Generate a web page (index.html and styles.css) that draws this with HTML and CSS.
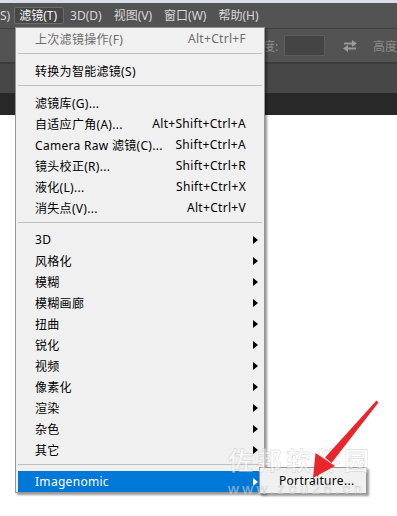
FILE: index.html
```html
<!DOCTYPE html>
<html lang="zh-CN">
<head>
<meta charset="utf-8">
<link rel="stylesheet" href="styles.css">
</head>
<body>
<div class="app">
  <div class="topstrip"></div>
  <div class="menubar">
    <span class="mb-item mb-cut">S)</span>
    <span class="mb-item mb-active">滤镜(T)</span>
    <span class="mb-item">3D(D)</span>
    <span class="mb-item">视图(V)</span>
    <span class="mb-item">窗口(W)</span>
    <span class="mb-item">帮助(H)</span>
  </div>
  <div class="toolbar">
    <span class="tb-label">度:</span>
    <span class="tb-input"></span>
    <svg class="tb-swap" width="16" height="14" viewBox="0 0 16 14">
      <path d="M2 4.5h9" stroke="#9a9a9a" stroke-width="2" fill="none"/>
      <path d="M10 1l5 3.5-5 3.5z" fill="#9a9a9a"/>
      <path d="M14 9.5H5" stroke="#9a9a9a" stroke-width="2" fill="none"/>
      <path d="M6 6l-5 3.5 5 3.5z" fill="#9a9a9a"/>
    </svg>
    <span class="tb-label tb-high">高度</span>
  </div>
  <div class="tabbar"></div>
  <div class="darkband"></div>
  <div class="canvas"></div>
</div>

<div class="dropdown">
  <div class="row disabled"><span class="label">上次滤镜操作(F)</span><span class="key">Alt+Ctrl+F</span><span class="slot"></span></div>
  <div class="sep"></div>
  <div class="row"><span class="label">转换为智能滤镜(S)</span><span class="slot"></span></div>
  <div class="sep"></div>
  <div class="row"><span class="label">滤镜库(G)...</span><span class="slot"></span></div>
  <div class="row"><span class="label">自适应广角(A)...</span><span class="key">Alt+Shift+Ctrl+A</span><span class="slot"></span></div>
  <div class="row"><span class="label">Camera Raw 滤镜(C)...</span><span class="key">Shift+Ctrl+A</span><span class="slot"></span></div>
  <div class="row"><span class="label">镜头校正(R)...</span><span class="key">Shift+Ctrl+R</span><span class="slot"></span></div>
  <div class="row"><span class="label">液化(L)...</span><span class="key">Shift+Ctrl+X</span><span class="slot"></span></div>
  <div class="row"><span class="label">消失点(V)...</span><span class="key">Alt+Ctrl+V</span><span class="slot"></span></div>
  <div class="sep"></div>
  <div class="row"><span class="label">3D</span><span class="slot"><i class="tri"></i></span></div>
  <div class="row"><span class="label">风格化</span><span class="slot"><i class="tri"></i></span></div>
  <div class="row"><span class="label">模糊</span><span class="slot"><i class="tri"></i></span></div>
  <div class="row"><span class="label">模糊画廊</span><span class="slot"><i class="tri"></i></span></div>
  <div class="row"><span class="label">扭曲</span><span class="slot"><i class="tri"></i></span></div>
  <div class="row"><span class="label">锐化</span><span class="slot"><i class="tri"></i></span></div>
  <div class="row"><span class="label">视频</span><span class="slot"><i class="tri"></i></span></div>
  <div class="row"><span class="label">像素化</span><span class="slot"><i class="tri"></i></span></div>
  <div class="row"><span class="label">渲染</span><span class="slot"><i class="tri"></i></span></div>
  <div class="row"><span class="label">杂色</span><span class="slot"><i class="tri"></i></span></div>
  <div class="row"><span class="label">其它</span><span class="slot"><i class="tri"></i></span></div>
  <div class="sep"></div>
  <div class="row hl"><span class="label">Imagenomic</span><span class="slot"><i class="tri tri-w"></i></span></div>
</div>

<div class="submenu"><span class="sub-label">Portraiture...</span></div>

<div class="watermark">
  <div class="wm-big">佐邦软件园</div>
  <div class="wm-small">www.zbu26.cn</div>
</div>

<svg class="redarrow" width="397" height="516" viewBox="0 0 397 516">
  <polygon points="376.5,400.5 378.5,402.5 331.5,463 325,457.5" fill="#e8262b"/>
  <polygon points="313,478 315.5,453 335,466" fill="#e8262b"/>
</svg>
</body>
</html>
```

FILE: styles.css
```css
html, body {
  margin: 0;
  padding: 0;
}
body {
  width: 397px;
  height: 516px;
  overflow: hidden;
  position: relative;
  background: #ffffff;
  font-family: "Noto Sans", "Noto Sans CJK SC", sans-serif;
  font-size: 12px;
}
.app {
  display: flex;
  flex-direction: column;
  height: 516px;
}
.topstrip {
  height: 3px;
  background: #dadeeb;
}
.menubar {
  height: 25px;
  background: #535353;
  display: flex;
  align-items: center;
  color: #d8d8d8;
  white-space: nowrap;
}
.mb-item {
  padding: 0 5px;
  line-height: 15px;
  height: 15px;
  border: 1px solid transparent;
  border-radius: 2px;
}
.mb-cut {
  padding: 0 3px 0 0;
  margin-left: -1px;
}
.mb-active {
  background: #474747;
  border-color: #6c6c6c;
  color: #f4f4f4;
  padding: 0 6px 0 4px;
}
.toolbar {
  height: 33px;
  border-top: 1px solid #414141;
  border-bottom: 2px solid #3c3c3c;
  background: #535353;
  display: flex;
  align-items: center;
  padding-left: 263px;
  color: #8c8c8c;
  white-space: nowrap;
}
.tb-input {
  width: 39px;
  height: 19px;
  margin-left: 6px;
  background: #444444;
  border: 1px solid #5d5d5d;
}
.tb-swap {
  margin-left: 17px;
}
.tb-high {
  margin-left: 15px;
}
.tabbar {
  height: 29px;
  background: #474747;
}
.darkband {
  height: 22px;
  background: #282828;
}
.canvas {
  flex: 1;
  background: #ffffff;
}

.dropdown {
  position: absolute;
  left: 15px;
  top: 27px;
  width: 244px;
  padding: 0 2px;
  background: #f0f0f0;
  border: 1px solid #979797;
  box-shadow: 2px 2px 2px rgba(0, 0, 0, 0.4);
  color: #000000;
  letter-spacing: 0.3px;
}
.row {
  height: 21px;
  display: flex;
  align-items: center;
  padding: 0 4px 0 17px;
  white-space: nowrap;
}
.row .label {
  flex: 1;
}
.row .key {
  text-align: right;
}
.slot {
  width: 12px;
  display: flex;
  justify-content: flex-end;
  align-items: center;
}
.tri {
  width: 0;
  height: 0;
  border-top: 4px solid transparent;
  border-bottom: 4px solid transparent;
  border-left: 5px solid #000000;
}
.tri-w {
  border-left-color: #ffffff;
}
.disabled {
  color: #6d6d6d;
}
.hl {
  background: #0078d7;
  color: #ffffff;
}
.sep {
  height: 1px;
  background: #bfbfbf;
  margin: 4px 0 6px;
}

.submenu {
  position: absolute;
  left: 259px;
  top: 467px;
  width: 106px;
  height: 25px;
  background: #f0f0f0;
  border: 1px solid #979797;
  box-shadow: 2px 2px 2px rgba(0, 0, 0, 0.4);
  display: flex;
  align-items: center;
  letter-spacing: 0.3px;
}
.sub-label {
  padding-left: 19px;
  color: #000000;
}

.watermark {
  position: absolute;
  left: 228px;
  top: 444px;
  width: 150px;
  color: rgba(255, 255, 255, 0.5);
  -webkit-text-stroke: 0.5px rgba(150, 150, 150, 0.45);
  pointer-events: none;
}
.wm-big {
  font-family: "Noto Sans CJK SC", sans-serif;
  font-size: 25px;
  line-height: 30px;
  letter-spacing: 4px;
  font-weight: 700;
}
.wm-small {
  font-family: "Liberation Sans", sans-serif;
  font-size: 15px;
  line-height: 18px;
  letter-spacing: 3.4px;
  margin-top: 6px;
}
.redarrow {
  position: absolute;
  left: 0;
  top: 0;
  pointer-events: none;
}
```
